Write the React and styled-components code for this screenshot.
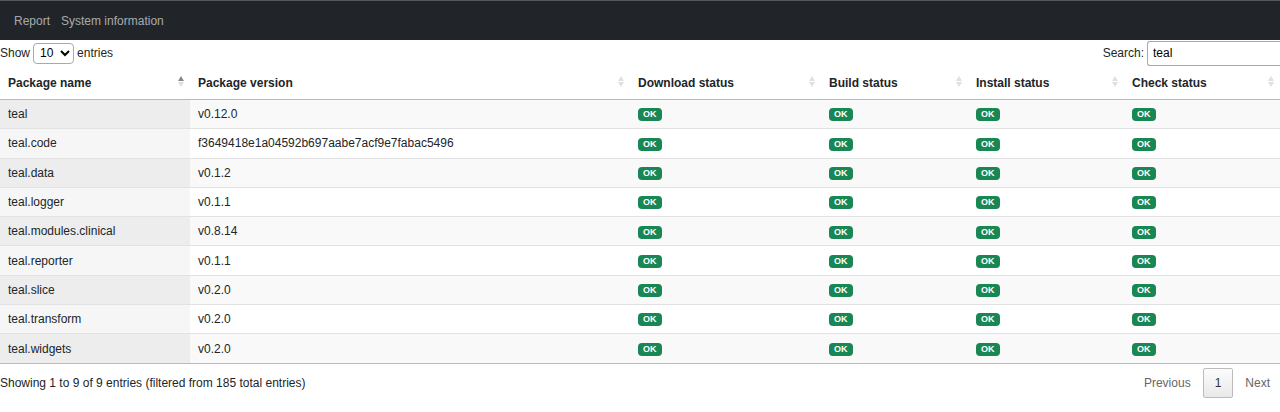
import React from "react";
import styled, { createGlobalStyle } from "styled-components";

const Global = createGlobalStyle`
  body {
    margin: 0;
    font-family: "Liberation Sans", Arial, sans-serif;
    font-size: 12px;
    color: #212529;
    background: #fff;
  }
`;

const Navbar = styled.nav`
  height: 40px;
  box-sizing: border-box;
  background: #212529;
  border-top: 1px solid #55585c;
  display: flex;
  align-items: center;
  gap: 11px;
  padding: 0 14px;
`;

const NavLink = styled.a`
  color: rgba(255, 255, 255, 0.62);
  font-size: 12px;
  text-decoration: none;
`;

const Controls = styled.div`
  display: flex;
  justify-content: space-between;
  align-items: center;
  height: 26px;
`;

const Label = styled.label`
  display: flex;
  align-items: center;
  gap: 3px;
  font-size: 12px;
`;

const Select = styled.select`
  width: 41px;
  height: 21px;
  font-size: 12px;
  font-family: inherit;
  border: 1px solid #aaa;
  border-radius: 4px;
  background: #fff;
  padding: 0 0 0 2px;
  align-self: flex-start;
`;

const SearchInput = styled.input`
  width: 133px;
  height: 25px;
  box-sizing: border-box;
  border: 1px solid #aaa;
  border-right: none;
  border-radius: 3px 0 0 3px;
  padding: 0 5px;
  font-size: 12px;
  font-family: inherit;
  color: #000;
`;

const Table = styled.table`
  width: 100%;
  border-collapse: collapse;
  table-layout: fixed;
`;

const Th = styled.th`
  position: relative;
  text-align: left;
  font-weight: bold;
  font-size: 12px;
  padding: 1px 8px 0;
  height: 32px;
  border-bottom: 1px solid #bbb;
`;

const SortIcon = styled.span`
  position: absolute;
  right: 6px;
  top: 10px;
  display: flex;
  flex-direction: column;
  gap: 1px;
  &::before, &::after {
    content: "";
    width: 0;
    height: 0;
    border-left: 3px solid transparent;
    border-right: 3px solid transparent;
  }
  &::before {
    border-bottom: 5px solid ${(p) => (p.$active ? "#888" : "#e0e0e0")};
  }
  &::after {
    border-top: 5px solid #e0e0e0;
  }
`;

const Tr = styled.tr`
  background: ${(p) => (p.$odd ? "#f9f9f9" : "#fff")};
`;

const Td = styled.td`
  padding: 0 8px;
  height: 28.3px;
  font-size: 12px;
  white-space: nowrap;
  border-top: ${(p) => (p.$first ? "none" : "1px solid #e2e2e2")};
  background: ${(p) =>
    p.$sorted ? (p.$odd ? "#ededed" : "#f6f6f6") : "transparent"};
`;

const Badge = styled.span`
  display: inline-block;
  background: #198754;
  color: #fff;
  font-weight: bold;
  font-size: 9px;
  line-height: 13px;
  padding: 0 5px;
  border-radius: 4px;
  vertical-align: middle;
`;

const Footer = styled.div`
  display: flex;
  justify-content: space-between;
  align-items: center;
  padding-top: 4px;
  border-top: 1px solid #bbb;
`;

const Info = styled.div`
  font-size: 12px;
`;

const Pager = styled.div`
  display: flex;
  align-items: center;
`;

const PageBtn = styled.span`
  display: inline-flex;
  align-items: center;
  justify-content: center;
  height: 30px;
  box-sizing: border-box;
  padding: 0 ${(p) => (p.$current ? "11px" : "9px")};
  margin-left: 2px;
  color: ${(p) => (p.$current ? "#333" : "#666")};
  font-size: 12px;
  border: 1px solid ${(p) => (p.$current ? "#bcbcbc" : "transparent")};
  border-radius: 2px;
  background: ${(p) =>
    p.$current ? "linear-gradient(#fcfcfc, #e9e9e9)" : "transparent"};
`;

const cols = [
  ["Package name", 190],
  ["Package version", 440],
  ["Download status", 191],
  ["Build status", 147],
  ["Install status", 156],
  ["Check status", 156],
];

const rows = [
  ["teal", "v0.12.0"],
  ["teal.code", "f3649418e1a04592b697aabe7acf9e7fabac5496"],
  ["teal.data", "v0.1.2"],
  ["teal.logger", "v0.1.1"],
  ["teal.modules.clinical", "v0.8.14"],
  ["teal.reporter", "v0.1.1"],
  ["teal.slice", "v0.2.0"],
  ["teal.transform", "v0.2.0"],
  ["teal.widgets", "v0.2.0"],
];

export default function App() {
  return (
    <>
      <Global />
      <Navbar>
        <NavLink href="#">Report</NavLink>
        <NavLink href="#">System information</NavLink>
      </Navbar>
      <Controls>
        <Label>
          Show
          <Select defaultValue="10">
            <option>10</option>
            <option>25</option>
            <option>50</option>
            <option>100</option>
          </Select>
          entries
        </Label>
        <Label>
          Search:
          <SearchInput defaultValue="teal" />
        </Label>
      </Controls>
      <Table>
        <colgroup>
          {cols.map(([n, w]) => (
            <col key={n} style={{ width: w }} />
          ))}
        </colgroup>
        <thead>
          <tr>
            {cols.map(([n], i) => (
              <Th key={n}>
                {n}
                <SortIcon $active={i === 0} />
              </Th>
            ))}
          </tr>
        </thead>
        <tbody>
          {rows.map(([name, ver], i) => {
            const odd = i % 2 === 0;
            const first = i === 0;
            return (
              <Tr key={name} $odd={odd}>
                <Td $sorted $odd={odd} $first={first}>{name}</Td>
                <Td $first={first}>{ver}</Td>
                {[0, 1, 2, 3].map((k) => (
                  <Td key={k} $first={first}>
                    <Badge>OK</Badge>
                  </Td>
                ))}
              </Tr>
            );
          })}
        </tbody>
      </Table>
      <Footer>
        <Info>Showing 1 to 9 of 9 entries (filtered from 185 total entries)</Info>
        <Pager>
          <PageBtn>Previous</PageBtn>
          <PageBtn $current>1</PageBtn>
          <PageBtn>Next</PageBtn>
        </Pager>
      </Footer>
    </>
  );
}
